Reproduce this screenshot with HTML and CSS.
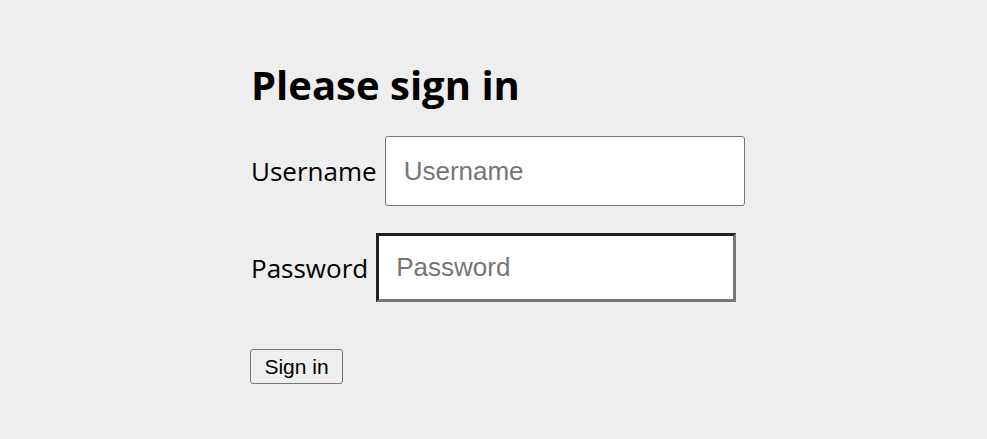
FILE: index.html
```html
<!DOCTYPE html>
<html>
<head>
<meta charset="utf-8">
<link rel="stylesheet" href="styles.css">
</head>
<body>
<form class="signin">
  <h1 class="title">Please sign in</h1>
  <div class="row">
    <label class="label" for="u">Username</label>
    <input class="field field-user" id="u" type="text" placeholder="Username">
  </div>
  <div class="row">
    <label class="label" for="p">Password</label>
    <input class="field field-pass" id="p" type="password" placeholder="Password">
  </div>
  <button class="btn" type="button">Sign in</button>
</form>
</body>
</html>
```
FILE: styles.css
```css
html, body {
  margin: 0;
  padding: 0;
  background: #eeeeee;
}
.signin {
  display: flex;
  flex-direction: column;
  align-items: flex-start;
  padding: 58px 0 0 250px;
  font-family: "Open Sans", "Noto Sans", sans-serif;
  color: #000;
}
.title {
  margin: 0 0 24px 1px;
  font-size: 40px;
  font-weight: 700;
  line-height: 54px;
}
.row {
  display: flex;
  align-items: center;
  gap: 8px;
  margin-bottom: 27px;
}
.label {
  font-size: 26px;
  padding-left: 1px;
}
.field {
  box-sizing: border-box;
  width: 360px;
  height: 70px;
  background: #fff;
  font-family: "Liberation Sans", Arial, sans-serif;
  font-size: 26px;
  color: #000;
  outline: none;
}
.field::placeholder {
  color: #757575;
}
.field-user {
  border: 1px solid #767676;
  border-radius: 3px;
  padding: 0 18px;
}
.field-pass {
  height: 69px;
  border: 3px solid;
  border-color: #222 #777 #777 #222;
  border-radius: 0;
  padding: 0 17px;
}
.btn {
  margin-top: 20px;
  box-sizing: border-box;
  width: 93px;
  height: 35px;
  border: 1px solid #767676;
  border-radius: 3px;
  background: #efefef;
  font-family: "Liberation Sans", Arial, sans-serif;
  font-size: 21px;
  color: #000;
  padding: 0;
}
```
